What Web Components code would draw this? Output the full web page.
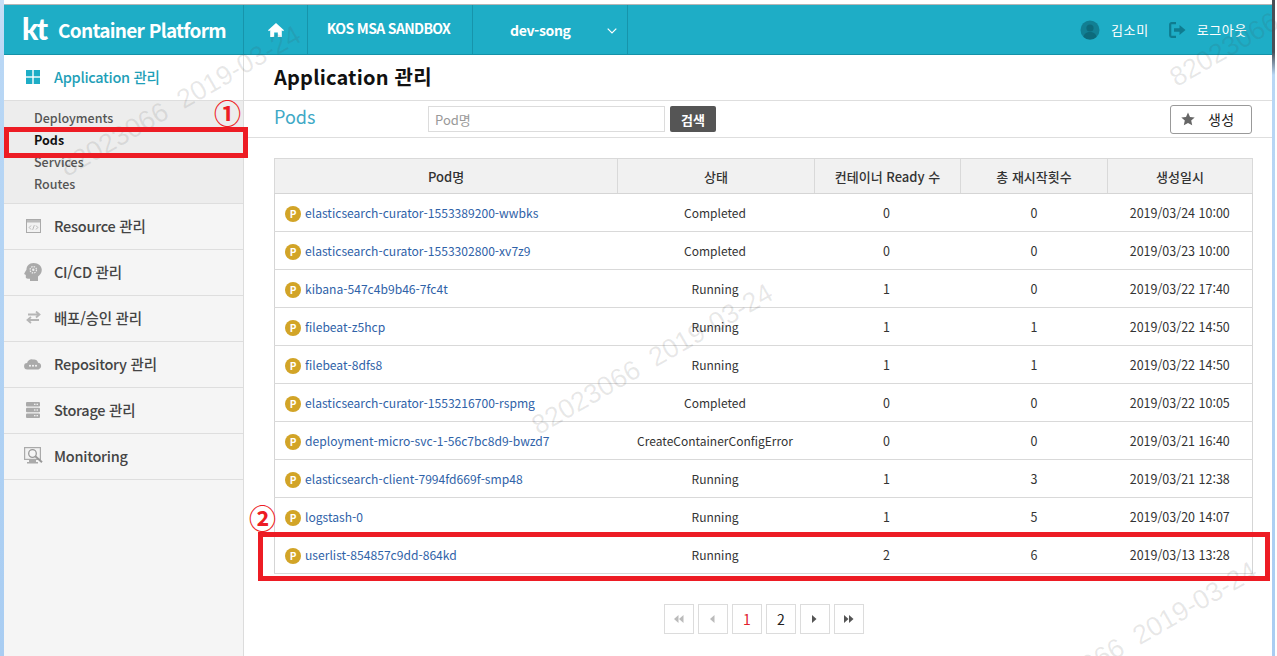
<!DOCTYPE html>
<html lang="ko">
<head>
<meta charset="utf-8">
<title>Container Platform</title>
<style>
  html, body { margin: 0; height: 100%; overflow: hidden; background: #fff; }
  body { font-family: "Noto Sans CJK KR", "Noto Sans", sans-serif; }
</style>
</head>
<body>
<app-shell>
  <app-header slot="header"></app-header>
  <side-nav slot="nav"></side-nav>
  <pod-page slot="main"></pod-page>
  <water-mark slot="over" x="30" y="150" text="82023066  2019-03-24"></water-mark>
  <water-mark slot="over" x="502" y="408" text="82023066  2019-03-24"></water-mark>
  <water-mark slot="over" x="1140" y="60" text="82023066"></water-mark>
  <water-mark slot="over" x="986" y="686" text="82023066  2019-03-24"></water-mark>
  <mark-box slot="over" x="4" y="127" w="244" h="31"></mark-box>
  <mark-box slot="over" x="258" y="532" w="1012" h="49"></mark-box>
  <mark-num slot="over" x="214" y="99">①</mark-num>
  <mark-num slot="over" x="249" y="504">②</mark-num>
</app-shell>

<script>
const FONT = '"Noto Sans CJK KR", "Noto Sans", sans-serif';

class AppShell extends HTMLElement {
  connectedCallback() {
    this.attachShadow({ mode: 'open' });
    this.shadowRoot.innerHTML = `
      <style>
        :host { display: block; position: relative; height: 656px; overflow: hidden; font-family: ${FONT}; }
        .frame { display: flex; height: 100%; }
        .edge-l { width: 4px; flex: none; background: linear-gradient(#c9dff5 0, #b9d7f5 60px, #a9cdf2 100%); }
        .edge-r { width: 5px; flex: none; box-sizing: border-box; border-right: 2px solid #fff;
          background: linear-gradient(#4a4f57 0, #4a4f57 52px, #b9d7f5 75px, #a9cdf2 100%); }
        .page { flex: 1; min-width: 0; display: flex; flex-direction: column; padding-top: 4px; }
        .top { border-top: 1px solid #b5b5b5; }
        .body { flex: 1; display: flex; min-height: 0; }
      </style>
      <div class="frame">
        <div class="edge-l"></div>
        <div class="page">
          <div class="top"><slot name="header"></slot></div>
          <div class="body"><slot name="nav"></slot><slot name="main"></slot></div>
        </div>
        <div class="edge-r"></div>
      </div>
      <slot name="over"></slot>`;
  }
}

class AppHeader extends HTMLElement {
  connectedCallback() {
    this.attachShadow({ mode: 'open' });
    this.shadowRoot.innerHTML = `
      <style>
        :host { display: flex; height: 50px; box-sizing: border-box; background: #1eadc6; border-bottom: 1px solid #1592a8; color: #fff; }
        .cell { display: flex; align-items: center; border-right: 1px solid #1794ab; box-sizing: border-box; flex: none; }
        .brand { width: 240px; padding-left: 18px; }
        .kt { font: 900 30px/1 Lato, sans-serif; letter-spacing: -1.5px; width: 36px; margin-top: -4px; }
        .name { font-size: 19px; font-weight: 700; letter-spacing: -.72px; white-space: nowrap; }
        .home { width: 64px; justify-content: center; }
        .kos { width: 165px; justify-content: center; font-size: 14px; font-weight: 700; letter-spacing: -.65px; padding: 0 3px 3px 0; }
        .proj { width: 155px; font-size: 14px; font-weight: 700; padding-left: 37px; position: relative; letter-spacing: -.35px; }
        .proj svg { position: absolute; left: 134px; top: 23px; }
        .right { margin-left: auto; display: flex; align-items: center; padding-right: 25px; font-size: 13px; }
        .right span { white-space: nowrap; letter-spacing: .6px; }
      </style>
      <div class="cell brand"><span class="kt">kt</span><span class="name">Container Platform</span></div>
      <div class="cell home">
        <svg width="16" height="14" viewBox="0 0 16 14"><path fill="#fff" d="M8 0 0 7.2l1 1 1.2-1V14h4V9.5h3.6V14h4V7.2l1.200 1 1-1z"/></svg>
      </div>
      <div class="cell kos">KOS MSA SANDBOX</div>
      <div class="cell proj">dev-song
        <svg width="10" height="6" viewBox="0 0 10 6"><path d="M.7.7 5 5 9.300.7" fill="none" stroke="#fff" stroke-width="1.200"/></svg>
      </div>
      <div class="right">
        <svg width="20" height="20" viewBox="0 0 20 20" style="margin-right:11px"><circle cx="10" cy="10" r="9.500" fill="#127f93"/><circle cx="10" cy="8" r="3.600" fill="#0d6a7b"/><path d="M3.500 17c.6-3.600 3.400-5 6.500-5s5.900 1.400 6.500 5a9.500 9.500 0 0 1-13 0z" fill="#0d6a7b"/></svg>
        <span>김소미</span>
        <svg width="17" height="16" viewBox="0 0 17 16" style="margin:0 11px 0 20px"><path d="M7 1.200H2.500a1.300 1.300 0 0 0-1.300 1.300v11a1.300 1.300 0 0 0 1.300 1.300H7" fill="none" stroke="#0f7c90" stroke-width="2.200"/><path d="M5 6.200h5.500V3L16.500 8l-6 5V9.800H5z" fill="#0f7c90"/></svg>
        <span>로그아웃</span>
      </div>`;
  }
}

const NAV_ICONS = {
  resource: `<svg width="15" height="14" viewBox="0 0 15 14"><rect x=".5" y=".5" width="14" height="13" fill="#f2f2f2" stroke="#aaa"/><path d="M1 1h13v2.500H1z" fill="#bbb"/><path d="M5 6.500 3.200 8.500 5 10.500M10 6.500l1.800 2-1.800 2M8.300 6.200 6.700 10.800" fill="none" stroke="#aaa" stroke-width=".8"/></svg>`,
  cicd: `<svg width="18" height="18" viewBox="0 0 18 18"><path d="M9.500 0C5 0 2.500 3 2.500 6.500c0 .6-2.300 3.600-2.300 4.300 0 .8 1.600.8 1.600 1.200v2.300c0 1 1 1.400 2 1.400h2.200V18h8v-4.500c2-1.300 3.800-3.600 3.800-6.700C17.800 3 14.500 0 9.500 0z" fill="#aaa"/><circle cx="9.300" cy="6.800" r="3.200" fill="none" stroke="#eee" stroke-width="1.200" stroke-dasharray="1.500 1"/><circle cx="9.300" cy="6.800" r="1.200" fill="#eee"/></svg>`,
  deploy: `<svg width="15" height="13" viewBox="0 0 15 13"><path d="M1 4h10.500M9 1l3.500 3L9 7" transform="translate(1 -.5)" fill="none" stroke="#b5b5b5" stroke-width="1.800"/><path d="M14 9H3.500M6 6 2.500 9 6 12" transform="translate(-1 0)" fill="none" stroke="#b5b5b5" stroke-width="1.800"/></svg>`,
  repo: `<svg width="18" height="12" viewBox="0 0 18 12"><path d="M3.500 11.500a3.200 3.200 0 0 1-.4-6.400A4.500 4.500 0 0 1 9 1.600a3.800 3.800 0 0 1 5 3.200 3.400 3.400 0 0 1 .5 6.700z" fill="#aaa"/><g fill="#f5f5f5"><circle cx="6" cy="7.700" r="1"/><circle cx="9" cy="7.700" r="1"/><circle cx="12" cy="7.700" r="1"/></g></svg>`,
  storage: `<svg width="14" height="16" viewBox="0 0 14 16"><g fill="#aaa"><rect width="14" height="4.500" rx="1"/><rect y="5.700" width="14" height="4.500" rx="1"/><rect y="11.400" width="14" height="4.500" rx="1"/></g><g fill="#f5f5f5"><rect x="8" y="1.700" width="1.500" height="1.200"/><rect x="10.500" y="1.700" width="1.500" height="1.200"/><rect x="8" y="7.400" width="1.500" height="1.200"/><rect x="10.500" y="7.400" width="1.500" height="1.200"/><rect x="8" y="13.100" width="1.500" height="1.200"/><rect x="10.500" y="13.100" width="1.500" height="1.200"/></g></svg>`,
  monitor: `<svg width="19" height="18" viewBox="0 0 19 18"><rect x=".6" y=".6" width="15.800" height="11.800" fill="#f2f2f2" stroke="#aaa" stroke-width="1.200"/><path d="M5 13h7v2h2v1.500H3V15h2z" fill="#aaa"/><circle cx="8.500" cy="6.500" r="3.800" fill="#f5f5f5" stroke="#999" stroke-width="1.300"/><path d="m11.300 9.300 6.700 6" stroke="#999" stroke-width="2"/></svg>`
};

class NavItem extends HTMLElement {
  connectedCallback() {
    this.attachShadow({ mode: 'open' });
    const ic = NAV_ICONS[this.getAttribute('icon')];
    this.shadowRoot.innerHTML = `
      <style>
        :host { display: flex; align-items: center; height: 46px; box-sizing: border-box; border-bottom: 1px solid #dedede; padding-bottom: 2px;
          font-size: 14.5px; font-weight: 500; color: #444; letter-spacing: -.25px; }
        .ic { width: 50px; display: flex; justify-content: center; padding-left: 8px; box-sizing: border-box; flex: none; }
      </style>
      <span class="ic">${ic}</span><slot></slot>`;
  }
}

class SideNav extends HTMLElement {
  connectedCallback() {
    this.attachShadow({ mode: 'open' });
    this.shadowRoot.innerHTML = `
      <style>
        :host { display: block; width: 240px; flex: none; box-sizing: border-box; background: #f5f5f5; border-right: 1px solid #dcdcdc; }
        .active { height: 46px; box-sizing: border-box; background: #fff; border-bottom: 1px solid #dedede; padding-bottom: 2px; display: flex; align-items: center;
          font-size: 14.5px; font-weight: 500; color: #1f9fb8; letter-spacing: -.3px; }
        .active svg { margin: 0 14px 0 22px; }
        .sub { background: #ededed; padding: 6px 0 8px 30px; border-bottom: 1px solid #dedede; font-size: 12.5px; font-weight: 500; color: #555; line-height: 22px; height: 103px; box-sizing: border-box; }
        .sub div { height: 22px; }
        .sub .on { color: #111; font-weight: 700; }
      </style>
      <div class="active">
        <svg width="14" height="14" viewBox="0 0 14 14"><g fill="#1eadc6"><rect width="6.300" height="6.300"/><rect x="7.700" width="6.300" height="6.300"/><rect y="7.700" width="6.300" height="6.300"/><rect x="7.700" y="7.700" width="6.300" height="6.300"/></g></svg>
        Application 관리
      </div>
      <div class="sub">
        <div>Deployments</div><div class="on">Pods</div><div>Services</div><div>Routes</div>
      </div>
      <nav-item icon="resource">Resource 관리</nav-item>
      <nav-item icon="cicd">CI/CD 관리</nav-item>
      <nav-item icon="deploy">배포/승인 관리</nav-item>
      <nav-item icon="repo">Repository 관리</nav-item>
      <nav-item icon="storage">Storage 관리</nav-item>
      <nav-item icon="monitor">Monitoring</nav-item>`;
  }
}

const PODS = [
  ['elasticsearch-curator-1553389200-wwbks', 'Completed', 0, 0, '2019/03/24 10:00'],
  ['elasticsearch-curator-1553302800-xv7z9', 'Completed', 0, 0, '2019/03/23 10:00'],
  ['kibana-547c4b9b46-7fc4t', 'Running', 1, 0, '2019/03/22 17:40'],
  ['filebeat-z5hcp', 'Running', 1, 1, '2019/03/22 14:50'],
  ['filebeat-8dfs8', 'Running', 1, 1, '2019/03/22 14:50'],
  ['elasticsearch-curator-1553216700-rspmg', 'Completed', 0, 0, '2019/03/22 10:05'],
  ['deployment-micro-svc-1-56c7bc8d9-bwzd7', 'CreateContainerConfigError', 0, 0, '2019/03/21 16:40'],
  ['elasticsearch-client-7994fd669f-smp48', 'Running', 1, 3, '2019/03/21 12:38'],
  ['logstash-0', 'Running', 1, 5, '2019/03/20 14:07'],
  ['userlist-854857c9dd-864kd', 'Running', 2, 6, '2019/03/13 13:28']
];

class PodTable extends HTMLElement {
  connectedCallback() {
    this.attachShadow({ mode: 'open' });
    const rows = PODS.map(p => `
      <tr>
        <td class="pod"><span class="p">P</span><a>${p[0]}</a></td>
        <td class="st">${p[1]}</td>
        <td class="rd">${p[2]}</td>
        <td>${p[3]}</td>
        <td>${p[4]}</td>
      </tr>`).join('');
    this.shadowRoot.innerHTML = `
      <style>
        :host { display: block; width: 979px; font-size: 12.5px; color: #333; }
        table { width: 100%; border-collapse: collapse; table-layout: fixed; border: 1px solid #d5d5d5; }
        th { height: 35px; padding: 0; background: #f1f1f1; border: 1px solid #d9d9d9; border-bottom: 1px solid #d5d5d5; font-weight: 500; font-size: 13px; box-sizing: border-box; color: #333; }
        td { height: 38px; padding: 0; text-align: center; border-bottom: 1px solid #d9d9d9; box-sizing: border-box; white-space: nowrap; }
        td.st { font-size: 12px; padding-right: 2px; }
        td.rd { padding-right: 2px; }
        td.pod { text-align: left; padding-left: 10px; color: #2f62a8; font-size: 12.1px; }
        .p { display: inline-flex; width: 16px; height: 16px; border-radius: 50%; background: #d2a427; color: #fff; font-size: 10px; font-weight: 700; align-items: center; justify-content: center; vertical-align: 0; margin-right: 4px; line-height: 1; }
        a { color: inherit; text-decoration: none; }
      </style>
      <table>
        <colgroup><col style="width:343px"><col style="width:197px"><col style="width:146px"><col style="width:147px"><col></colgroup>
        <thead><tr><th>Pod명</th><th>상태</th><th>컨테이너 Ready 수</th><th>총 재시작횟수</th><th>생성일시</th></tr></thead>
        <tbody>${rows}</tbody>
      </table>`;
  }
}

class PageNav extends HTMLElement {
  connectedCallback() {
    this.attachShadow({ mode: 'open' });
    const tri = (dir, n, col) => {
      let s = '';
      for (let i = 0; i < n; i++) {
        const x = i * 5;
        s += dir > 0 ? `<path d="M${x} 0l4.500 4-4.500 4z"/>` : `<path d="M${x + 4.500} 0l-4.500 4 4.500 4z"/>`;
      }
      return `<svg width="${n * 5}" height="8" viewBox="0 0 ${n * 5} 8" fill="${col}">${s}</svg>`;
    };
    this.shadowRoot.innerHTML = `
      <style>
        :host { display: flex; gap: 4px; justify-content: center; font-size: 14px; color: #222; }
        div { width: 30px; height: 30px; box-sizing: border-box; border: 1px solid #dcdcdc; display: flex; align-items: center; justify-content: center; }
        .num { padding-left: 1px; }
        .cur { color: #e0202a; }
      </style>
      <div>${tri(-1, 2, '#bbb')}</div>
      <div>${tri(-1, 1, '#bbb')}</div>
      <div class="num cur">1</div>
      <div class="num">2</div>
      <div>${tri(1, 1, '#555')}</div>
      <div>${tri(1, 2, '#555')}</div>`;
  }
}

class PodPage extends HTMLElement {
  connectedCallback() {
    this.attachShadow({ mode: 'open' });
    this.shadowRoot.innerHTML = `
      <style>
        :host { display: block; flex: 1; min-width: 0; background: #fff; }
        h1 { margin: 0; height: 46px; box-sizing: border-box; padding-left: 30px; border-bottom: 1px solid #dedede; font-size: 20px; font-weight: 700; color: #111; line-height: 44px; letter-spacing: .2px; }
        .bar { height: 37px; box-sizing: border-box; border-bottom: 1px solid #dedede; display: flex; align-items: center; padding-left: 30px; position: relative; }
        .ttl { width: 154px; font-size: 18px; color: #3fa9c6; padding-bottom: 6px; }
        input { width: 237px; height: 26px; box-sizing: border-box; border: 1px solid #dcdcdc; padding: 0 0 0 6px; font: 13px ${FONT}; margin: 0; outline: none; }
        input::placeholder { color: #999; }
        .go { margin-left: 5px; width: 46px; height: 26px; background: #555; color: #fff; border-radius: 2px; font-size: 13px; font-weight: 700; display: flex; align-items: center; justify-content: center; }
        .new { margin-left: auto; margin-right: 20px; width: 82px; height: 29px; box-sizing: border-box; border: 1px solid #999; border-radius: 3px; display: flex; align-items: center; padding-left: 10px; font-size: 14px; color: #222; letter-spacing: .3px; }
        .new svg { margin-right: 13px; }
        .wrap { padding: 20px 0 0 30px; }
        page-nav { margin-top: 30px; width: 979px; }
      </style>
      <h1>Application 관리</h1>
      <div class="bar">
        <span class="ttl">Pods</span>
        <input placeholder="Pod명">
        <span class="go">검색</span>
        <span class="new">
          <svg width="14" height="14" viewBox="0 0 14 14"><path fill="#666" d="m7 .5 2 4.400 4.700.5-3.500 3.200 1 4.700L7 11l-4.200 2.300 1-4.700L.3 5.400 5 4.900z"/></svg>
          생성
        </span>
      </div>
      <div class="wrap">
        <pod-table></pod-table>
        <page-nav></page-nav>
      </div>`;
  }
}

// 이미지 위에 찍힌 워터마크 / 주석 표시
class WaterMark extends HTMLElement {
  connectedCallback() {
    this.attachShadow({ mode: 'open' });
    this.shadowRoot.innerHTML = `
      <style>
        :host { position: absolute; left: ${this.getAttribute('x')}px; top: ${this.getAttribute('y')}px; transform-origin: 0 100%; transform: rotate(-30deg);
          font: 27px/1 "Liberation Sans", sans-serif; color: rgba(70,70,70,.12); white-space: pre; pointer-events: none; }
      </style>${this.getAttribute('text')}`;
  }
}

class MarkBox extends HTMLElement {
  connectedCallback() {
    this.attachShadow({ mode: 'open' });
    const a = n => this.getAttribute(n);
    this.shadowRoot.innerHTML = `
      <style>
        :host { position: absolute; left: ${a('x')}px; top: ${a('y')}px; width: ${a('w')}px; height: ${a('h')}px; box-sizing: border-box; border: 5px solid #ed1c24; }
      </style>`;
  }
}

class MarkNum extends HTMLElement {
  connectedCallback() {
    this.attachShadow({ mode: 'open' });
    this.shadowRoot.innerHTML = `
      <style>
        :host { position: absolute; left: ${this.getAttribute('x')}px; top: ${this.getAttribute('y')}px; font: 700 27px/1 "Noto Sans CJK KR", sans-serif; color: #ed1c24; }
      </style><slot></slot>`;
  }
}

customElements.define('nav-item', NavItem);
customElements.define('side-nav', SideNav);
customElements.define('app-header', AppHeader);
customElements.define('pod-table', PodTable);
customElements.define('page-nav', PageNav);
customElements.define('pod-page', PodPage);
customElements.define('water-mark', WaterMark);
customElements.define('mark-box', MarkBox);
customElements.define('mark-num', MarkNum);
customElements.define('app-shell', AppShell);
</script>
</body>
</html>
